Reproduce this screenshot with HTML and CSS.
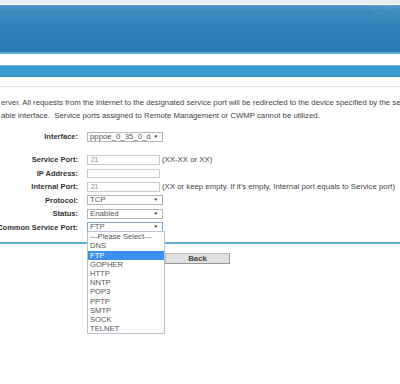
FILE: index.html
```html
<!DOCTYPE html>
<html lang="en">
<head>
    <meta charset="UTF-8">
    <meta name="viewport" content="width=device-width, initial-scale=1.0">
    <title>Virtual Server</title>
    <link rel="stylesheet" href="styles.css">
</head>
<body>
    <div class="topbar"></div>
    <div class="header"></div>
    <div class="subbar"></div>
    <div class="rule"></div>

    <div class="intro">
        <p>erver. All requests from the Internet to the designated service port will be redirected to the device specified by the server</p>
        <p>able interface.&nbsp; Service ports assigned to Remote Management or CWMP cannot be utilized.</p>
    </div>

    <div class="form">
        <div class="row first">
            <div class="label"><span>Interface:</span></div>
            <div class="select"><span>pppoe_0_35_0_d</span><span class="arrow">▼</span></div>
        </div>
        <div class="row">
            <div class="label"><span>Service Port:</span></div>
            <input class="input" type="text" value="21">
            <span class="hint">(XX-XX or XX)</span>
        </div>
        <div class="row">
            <div class="label"><span>IP Address:</span></div>
            <input class="input" type="text" value="">
        </div>
        <div class="row">
            <div class="label"><span>Internal Port:</span></div>
            <input class="input" type="text" value="21">
            <span class="hint">(XX or keep empty. If it's empty, Internal port equals to Service port)</span>
        </div>
        <div class="row">
            <div class="label"><span>Protocol:</span></div>
            <div class="select"><span>TCP</span><span class="arrow">▼</span></div>
        </div>
        <div class="row">
            <div class="label"><span>Status:</span></div>
            <div class="select"><span>Enabled</span><span class="arrow">▼</span></div>
        </div>
        <div class="row">
            <div class="label"><span>Common Service Port:</span></div>
            <div class="select focused">
                <span>FTP</span><span class="arrow">▼</span>
                <ul class="dropdown">
                    <li>---Please Select---</li>
                    <li>DNS</li>
                    <li class="active">FTP</li>
                    <li>GOPHER</li>
                    <li>HTTP</li>
                    <li>NNTP</li>
                    <li>POP3</li>
                    <li>PPTP</li>
                    <li>SMTP</li>
                    <li>SOCK</li>
                    <li>TELNET</li>
                </ul>
            </div>
        </div>
    </div>

    <div class="bottom-line"></div>
    <div class="actions">
        <button class="button">Back</button>
    </div>
</body>
</html>
```

FILE: styles.css
```css
*{
    margin: 0;
    padding: 0;
    box-sizing: border-box;
}
body{
    font-family: "Liberation Sans", Arial, sans-serif;
    font-size: 7.8px;
    color: #444;
    background-color: white;
    width: 400px;
    height: 384px;
    overflow: hidden;
}

.topbar {
    height: 5px;
    background-color: #eceff2;
    border-bottom: 1px solid white;
}
.header {
    position: relative;
    height: 49px;
    background: linear-gradient(#5c9ccb 0, #3d89c0 5px, #3283ba 40%, #2a78b0 100%);
    border-bottom: 2px solid #55acd9;
}
.header::after {
    content: "";
    position: absolute;
    top: 0;
    right: 0;
    width: 28px;
    height: 16px;
    background: repeating-linear-gradient(45deg, rgba(255,255,255,0.06) 0 1px, transparent 1px 3px);
}
.subbar {
    margin-top: 11px;
    height: 12px;
    background-color: #3a9bd0;
    border-top: 1px solid #6ab9e2;
    border-bottom: 1px solid #2d8dc3;
}
.rule {
    margin-top: 9px;
    height: 1px;
    background-color: #dfe6ec;
}

.intro {
    margin-top: 9px;
    padding-left: 1px;
    line-height: 13px;
    color: #444;
    white-space: nowrap;
}

.form {
    margin-top: 8px;
}
.row {
    display: flex;
    align-items: center;
    height: 13.5px;
}
.row.first {
    margin-bottom: 9.5px;
}
.label {
    width: 78px;
    flex: none;
    display: flex;
    justify-content: flex-end;
    margin-right: 9px;
    font-size: 7.5px;
    font-weight: bold;
    color: #333;
    white-space: nowrap;
}

.input {
    width: 73px;
    height: 9.5px;
    border: 1px solid #c9c9c9;
    font-family: "Liberation Sans", Arial, sans-serif;
    font-size: 6.5px;
    color: #888;
    padding-left: 3px;
    outline: none;
}
.hint {
    margin-left: 2px;
    white-space: nowrap;
}

.select {
    position: relative;
    width: 76px;
    height: 10px;
    border: 1px solid #b5b5b5;
    background-color: white;
    font-size: 7.8px;
    line-height: 8px;
    color: #555;
    padding-left: 2px;
    white-space: nowrap;
}
.select.focused {
    border-color: #7aa7d8;
}
.arrow {
    position: absolute;
    right: 4px;
    top: 0;
    font-size: 4.5px;
    color: #222;
}

.dropdown {
    position: absolute;
    top: 100%;
    left: -1px;
    width: 78px;
    list-style: none;
    background-color: white;
    border: 1px solid #b8c2d2;
    z-index: 2;
}
.dropdown li {
    height: 9.2px;
    line-height: 9.2px;
    padding-left: 2px;
    color: #555;
    font-size: 7.6px;
}
.dropdown li.active {
    background-color: #3b8fee;
    color: white;
}

.bottom-line {
    margin-top: 8px;
    height: 2px;
    background-color: #5aacd8;
}
.actions {
    margin-top: 8.5px;
    padding-left: 165px;
}
.button {
    width: 65px;
    height: 11px;
    background-color: #e1e1e1;
    border: 1px solid #b9b9b9;
    border-right-color: #999;
    border-bottom-color: #999;
    font-family: "Liberation Sans", Arial, sans-serif;
    font-size: 7.8px;
    font-weight: bold;
    color: #444;
    line-height: 9px;
}
```
